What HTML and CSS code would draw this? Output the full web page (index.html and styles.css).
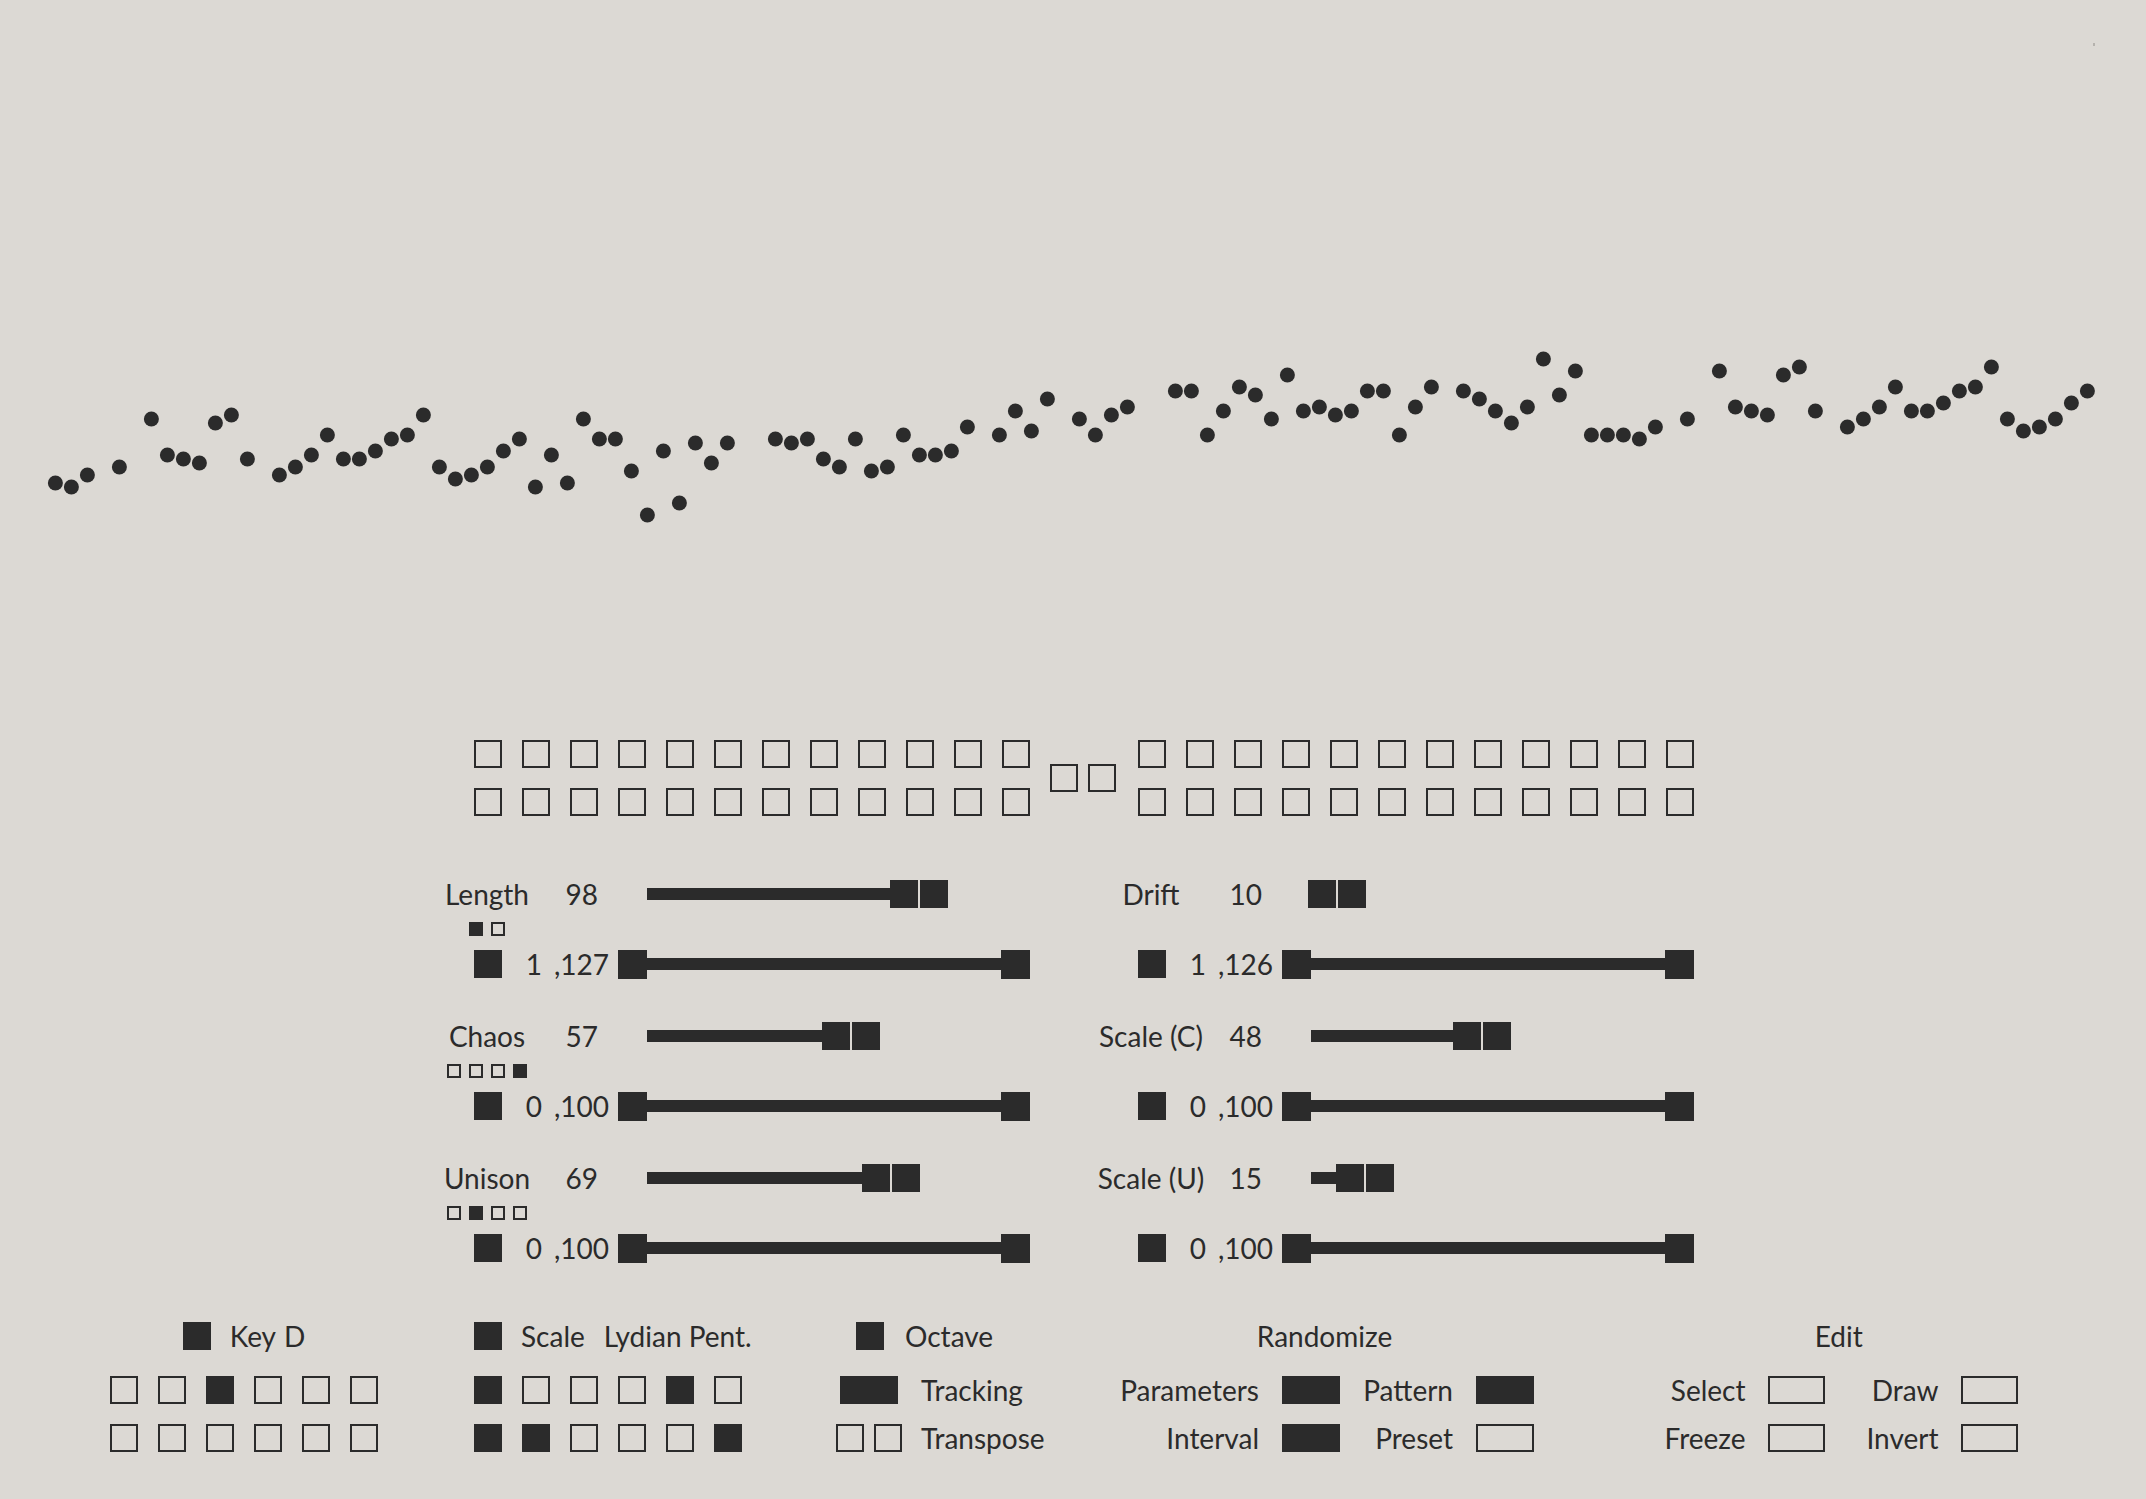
FILE: index.html
```html
<!DOCTYPE html>
<html lang="en">
<head>
<meta charset="utf-8">
<title>Sequencer</title>
<link rel="stylesheet" href="styles.css">
</head>
<body>
<svg class="plot" width="2146" height="720" viewBox="0 0 2146 720" xmlns="http://www.w3.org/2000/svg">
  <rect x="2093" y="43" width="2" height="3" fill="#b5b2ad"/>
  <g fill="#2b2b2b">
    <circle cx="55.4" cy="483" r="7.5"/><circle cx="71.4" cy="487" r="7.5"/><circle cx="87.4" cy="475" r="7.5"/>
    <circle cx="119.4" cy="467" r="7.5"/><circle cx="151.4" cy="419" r="7.5"/><circle cx="167.4" cy="455" r="7.5"/>
    <circle cx="183.4" cy="459" r="7.5"/><circle cx="199.4" cy="463" r="7.5"/><circle cx="215.4" cy="423" r="7.5"/>
    <circle cx="231.4" cy="415" r="7.5"/><circle cx="247.4" cy="459" r="7.5"/><circle cx="279.4" cy="475" r="7.5"/>
    <circle cx="295.4" cy="467" r="7.5"/><circle cx="311.4" cy="455" r="7.5"/><circle cx="327.4" cy="435" r="7.5"/>
    <circle cx="343.4" cy="459" r="7.5"/><circle cx="359.4" cy="459" r="7.5"/><circle cx="375.4" cy="451" r="7.5"/>
    <circle cx="391.4" cy="439" r="7.5"/><circle cx="407.4" cy="435" r="7.5"/><circle cx="423.4" cy="415" r="7.5"/>
    <circle cx="439.4" cy="467" r="7.5"/><circle cx="455.4" cy="479" r="7.5"/><circle cx="471.4" cy="475" r="7.5"/>
    <circle cx="487.4" cy="467" r="7.5"/><circle cx="503.4" cy="451" r="7.5"/><circle cx="519.4" cy="439" r="7.5"/>
    <circle cx="535.4" cy="487" r="7.5"/><circle cx="551.4" cy="455" r="7.5"/><circle cx="567.4" cy="483" r="7.5"/>
    <circle cx="583.4" cy="419" r="7.5"/><circle cx="599.4" cy="439" r="7.5"/><circle cx="615.4" cy="439" r="7.5"/>
    <circle cx="631.4" cy="471" r="7.5"/><circle cx="647.4" cy="515" r="7.5"/><circle cx="663.4" cy="451" r="7.5"/>
    <circle cx="679.4" cy="503" r="7.5"/><circle cx="695.4" cy="443" r="7.5"/><circle cx="711.4" cy="463" r="7.5"/>
    <circle cx="727.4" cy="443" r="7.5"/><circle cx="775.4" cy="439" r="7.5"/><circle cx="791.4" cy="443" r="7.5"/>
    <circle cx="807.4" cy="439" r="7.5"/><circle cx="823.4" cy="459" r="7.5"/><circle cx="839.4" cy="467" r="7.5"/>
    <circle cx="855.4" cy="439" r="7.5"/><circle cx="871.4" cy="471" r="7.5"/><circle cx="887.4" cy="467" r="7.5"/>
    <circle cx="903.4" cy="435" r="7.5"/><circle cx="919.4" cy="455" r="7.5"/><circle cx="935.4" cy="455" r="7.5"/>
    <circle cx="951.4" cy="451" r="7.5"/><circle cx="967.4" cy="427" r="7.5"/><circle cx="999.4" cy="435" r="7.5"/>
    <circle cx="1015.4" cy="411" r="7.5"/><circle cx="1031.4" cy="431" r="7.5"/><circle cx="1047.4" cy="399" r="7.5"/>
    <circle cx="1079.4" cy="419" r="7.5"/><circle cx="1095.4" cy="435" r="7.5"/><circle cx="1111.4" cy="415" r="7.5"/>
    <circle cx="1127.4" cy="407" r="7.5"/><circle cx="1175.4" cy="391" r="7.5"/><circle cx="1191.4" cy="391" r="7.5"/>
    <circle cx="1207.4" cy="435" r="7.5"/><circle cx="1223.4" cy="411" r="7.5"/><circle cx="1239.4" cy="387" r="7.5"/>
    <circle cx="1255.4" cy="395" r="7.5"/><circle cx="1271.4" cy="419" r="7.5"/><circle cx="1287.4" cy="375" r="7.5"/>
    <circle cx="1303.4" cy="411" r="7.5"/><circle cx="1319.4" cy="407" r="7.5"/><circle cx="1335.4" cy="415" r="7.5"/>
    <circle cx="1351.4" cy="411" r="7.5"/><circle cx="1367.4" cy="391" r="7.5"/><circle cx="1383.4" cy="391" r="7.5"/>
    <circle cx="1399.4" cy="435" r="7.5"/><circle cx="1415.4" cy="407" r="7.5"/><circle cx="1431.4" cy="387" r="7.5"/>
    <circle cx="1463.4" cy="391" r="7.5"/><circle cx="1479.4" cy="399" r="7.5"/><circle cx="1495.4" cy="411" r="7.5"/>
    <circle cx="1511.4" cy="423" r="7.5"/><circle cx="1527.4" cy="407" r="7.5"/><circle cx="1543.4" cy="359" r="7.5"/>
    <circle cx="1559.4" cy="395" r="7.5"/><circle cx="1575.4" cy="371" r="7.5"/><circle cx="1591.4" cy="435" r="7.5"/>
    <circle cx="1607.4" cy="435" r="7.5"/><circle cx="1623.4" cy="435" r="7.5"/><circle cx="1639.4" cy="439" r="7.5"/>
    <circle cx="1655.4" cy="427" r="7.5"/><circle cx="1687.4" cy="419" r="7.5"/><circle cx="1719.4" cy="371" r="7.5"/>
    <circle cx="1735.4" cy="407" r="7.5"/><circle cx="1751.4" cy="411" r="7.5"/><circle cx="1767.4" cy="415" r="7.5"/>
    <circle cx="1783.4" cy="375" r="7.5"/><circle cx="1799.4" cy="367" r="7.5"/><circle cx="1815.4" cy="411" r="7.5"/>
    <circle cx="1847.4" cy="427" r="7.5"/><circle cx="1863.4" cy="419" r="7.5"/><circle cx="1879.4" cy="407" r="7.5"/>
    <circle cx="1895.4" cy="387" r="7.5"/><circle cx="1911.4" cy="411" r="7.5"/><circle cx="1927.4" cy="411" r="7.5"/>
    <circle cx="1943.4" cy="403" r="7.5"/><circle cx="1959.4" cy="391" r="7.5"/><circle cx="1975.4" cy="387" r="7.5"/>
    <circle cx="1991.4" cy="367" r="7.5"/><circle cx="2007.4" cy="419" r="7.5"/><circle cx="2023.4" cy="431" r="7.5"/>
    <circle cx="2039.4" cy="427" r="7.5"/><circle cx="2055.4" cy="419" r="7.5"/><circle cx="2071.4" cy="403" r="7.5"/>
    <circle cx="2087.4" cy="391" r="7.5"/>
  </g>
</svg>

<div class="seq">
  <div class="seq-grp">
    <i class="sq"></i><i class="sq"></i><i class="sq"></i><i class="sq"></i><i class="sq"></i><i class="sq"></i><i class="sq"></i><i class="sq"></i><i class="sq"></i><i class="sq"></i><i class="sq"></i><i class="sq"></i>
    <i class="sq"></i><i class="sq"></i><i class="sq"></i><i class="sq"></i><i class="sq"></i><i class="sq"></i><i class="sq"></i><i class="sq"></i><i class="sq"></i><i class="sq"></i><i class="sq"></i><i class="sq"></i>
  </div>
  <div class="seq-mid"><i class="sq"></i><i class="sq"></i></div>
  <div class="seq-grp seq-right">
    <i class="sq"></i><i class="sq"></i><i class="sq"></i><i class="sq"></i><i class="sq"></i><i class="sq"></i><i class="sq"></i><i class="sq"></i><i class="sq"></i><i class="sq"></i><i class="sq"></i><i class="sq"></i>
    <i class="sq"></i><i class="sq"></i><i class="sq"></i><i class="sq"></i><i class="sq"></i><i class="sq"></i><i class="sq"></i><i class="sq"></i><i class="sq"></i><i class="sq"></i><i class="sq"></i><i class="sq"></i>
  </div>
</div>

<div class="controls">
  <div class="ctl">
    <div class="ctl-top">
      <span class="lbl">Length</span><span class="val">98</span>
      <div class="vslider"><div class="vtrack" style="width:243px"></div><div class="knob"><i></i><i></i></div></div>
    </div>
    <div class="ctl-modes"><i class="sqs on"></i><i class="sqs"></i></div>
    <div class="ctl-range">
      <i class="sq on"></i><span class="rmin">1</span><span class="rmax">,127</span>
      <div class="rslider"><i class="rk"></i><div class="rtrack"></div><i class="rk"></i></div>
    </div>
  </div>
  <div class="ctl">
    <div class="ctl-top">
      <span class="lbl">Drift</span><span class="val">10</span>
      <div class="vslider"><div class="vtrack" style="width:0px"></div><div class="knob knob-start"><i></i><i></i></div></div>
    </div>
    <div class="ctl-modes"></div>
    <div class="ctl-range">
      <i class="sq on"></i><span class="rmin">1</span><span class="rmax">,126</span>
      <div class="rslider"><i class="rk"></i><div class="rtrack"></div><i class="rk"></i></div>
    </div>
  </div>
  <div class="ctl">
    <div class="ctl-top">
      <span class="lbl">Chaos</span><span class="val">57</span>
      <div class="vslider"><div class="vtrack" style="width:175px"></div><div class="knob"><i></i><i></i></div></div>
    </div>
    <div class="ctl-modes"><i class="sqs"></i><i class="sqs"></i><i class="sqs"></i><i class="sqs on"></i></div>
    <div class="ctl-range">
      <i class="sq on"></i><span class="rmin">0</span><span class="rmax">,100</span>
      <div class="rslider"><i class="rk"></i><div class="rtrack"></div><i class="rk"></i></div>
    </div>
  </div>
  <div class="ctl">
    <div class="ctl-top">
      <span class="lbl">Scale (C)</span><span class="val">48</span>
      <div class="vslider"><div class="vtrack" style="width:142px"></div><div class="knob"><i></i><i></i></div></div>
    </div>
    <div class="ctl-modes"></div>
    <div class="ctl-range">
      <i class="sq on"></i><span class="rmin">0</span><span class="rmax">,100</span>
      <div class="rslider"><i class="rk"></i><div class="rtrack"></div><i class="rk"></i></div>
    </div>
  </div>
  <div class="ctl">
    <div class="ctl-top">
      <span class="lbl">Unison</span><span class="val">69</span>
      <div class="vslider"><div class="vtrack" style="width:215px"></div><div class="knob"><i></i><i></i></div></div>
    </div>
    <div class="ctl-modes"><i class="sqs"></i><i class="sqs on"></i><i class="sqs"></i><i class="sqs"></i></div>
    <div class="ctl-range">
      <i class="sq on"></i><span class="rmin">0</span><span class="rmax">,100</span>
      <div class="rslider"><i class="rk"></i><div class="rtrack"></div><i class="rk"></i></div>
    </div>
  </div>
  <div class="ctl">
    <div class="ctl-top">
      <span class="lbl">Scale (U)</span><span class="val">15</span>
      <div class="vslider"><div class="vtrack" style="width:25px"></div><div class="knob"><i></i><i></i></div></div>
    </div>
    <div class="ctl-modes"></div>
    <div class="ctl-range">
      <i class="sq on"></i><span class="rmin">0</span><span class="rmax">,100</span>
      <div class="rslider"><i class="rk"></i><div class="rtrack"></div><i class="rk"></i></div>
    </div>
  </div>
</div>

<div class="bottom">
  <div class="b-key">
    <div class="bhead key-head"><i class="sq on"></i><span>Key</span><span class="kv">D</span></div>
    <div class="bgrid6">
      <i class="sq"></i><i class="sq"></i><i class="sq on"></i><i class="sq"></i><i class="sq"></i><i class="sq"></i>
      <i class="sq"></i><i class="sq"></i><i class="sq"></i><i class="sq"></i><i class="sq"></i><i class="sq"></i>
    </div>
  </div>
  <div class="b-scale">
    <div class="bhead"><i class="sq on"></i><span>Scale</span><span>Lydian Pent.</span></div>
    <div class="bgrid6">
      <i class="sq on"></i><i class="sq"></i><i class="sq"></i><i class="sq"></i><i class="sq on"></i><i class="sq"></i>
      <i class="sq on"></i><i class="sq on"></i><i class="sq"></i><i class="sq"></i><i class="sq"></i><i class="sq on"></i>
    </div>
  </div>
  <div class="b-oct">
    <div class="bhead oct-head"><i class="sq on"></i><span>Octave</span></div>
    <div class="orows">
      <div class="orow"><div class="octl"><i class="wide on"></i></div><span>Tracking</span></div>
      <div class="orow"><div class="octl"><i class="sq"></i><i class="sq"></i></div><span>Transpose</span></div>
    </div>
  </div>
  <div class="b-rand">
    <div class="bhead center">Randomize</div>
    <div class="pgrid rand-grid">
      <span class="pl">Parameters</span><i class="wide on"></i><span class="pl">Pattern</span><i class="wide on"></i>
      <span class="pl">Interval</span><i class="wide on"></i><span class="pl">Preset</span><i class="wide"></i>
    </div>
  </div>
  <div class="b-edit">
    <div class="bhead center">Edit</div>
    <div class="pgrid edit-grid">
      <span class="pl">Select</span><i class="wide"></i><span class="pl">Draw</span><i class="wide"></i>
      <span class="pl">Freeze</span><i class="wide"></i><span class="pl">Invert</span><i class="wide"></i>
    </div>
  </div>
</div>
</body>
</html>
```

FILE: styles.css
```css
* { box-sizing: border-box; }

html, body {
  margin: 0;
  padding: 0;
  background: #dcd9d4;
}

body {
  width: 2146px;
  height: 1499px;
  overflow: hidden;
  font-family: "Lato", "Liberation Sans", sans-serif;
  font-weight: 400;
  font-size: 28px;
  line-height: 28px;
  color: #2b2b2b;
}

i { display: block; }

.plot { display: block; }

/* generic squares */
.sq {
  width: 28px;
  height: 28px;
  border: 2px solid #2b2b2b;
  flex: none;
}
.sq.on { background: #2b2b2b; }

.wide {
  width: 58px;
  height: 28px;
  border: 2px solid #2b2b2b;
  flex: none;
}
.wide.on { background: #2b2b2b; }

/* step grid */
.seq {
  display: flex;
  align-items: center;
  padding: 20px 0 0 474px;
}
.seq-grp {
  display: grid;
  grid-template-columns: repeat(12, 28px);
  gap: 20px;
}
.seq-mid {
  display: flex;
  gap: 10.5px;
  margin-left: 19.5px;
}
.seq-right { margin-left: 22px; }

/* controls */
.controls {
  display: grid;
  grid-template-columns: 664px 664px;
  row-gap: 43.5px;
  padding-left: 427px;
  margin-top: 64px;
}
.ctl-top {
  display: flex;
  align-items: center;
  height: 28px;
}
.lbl {
  width: 120px;
  text-align: center;
  white-space: nowrap;
}
.val {
  width: 51px;
  text-align: right;
}
.vslider {
  margin-left: 49px;
  width: 383px;
  display: flex;
  align-items: center;
}
.vtrack {
  height: 12px;
  background: #2b2b2b;
}
.knob {
  display: flex;
  gap: 2px;
}
.knob i {
  width: 28px;
  height: 28px;
  background: #2b2b2b;
}
.knob-start { margin-left: -3px; }

.ctl-modes {
  margin-top: 14px;
  height: 14px;
  width: 120px;
  display: flex;
  justify-content: center;
  gap: 8px;
}
.sqs {
  width: 14px;
  height: 14px;
  border: 2px solid #2b2b2b;
}
.sqs.on { background: #2b2b2b; }

.ctl-range {
  margin-top: 13.5px;
  height: 29px;
  display: flex;
  align-items: center;
  padding-left: 47px;
}
.rmin {
  width: 40px;
  text-align: right;
}
.rmax {
  margin-left: 12px;
  width: 64px;
}
.rslider {
  width: 412px;
  display: flex;
  align-items: center;
}
.rk {
  width: 29px;
  height: 29px;
  background: #2b2b2b;
}
.rtrack {
  flex: 1;
  height: 12px;
  background: #2b2b2b;
}

/* bottom */
.bottom {
  display: flex;
  margin-top: 59.5px;
  padding-left: 110px;
}
.bhead {
  display: flex;
  align-items: center;
  gap: 19px;
  height: 28px;
  white-space: nowrap;
}
.bhead.center { justify-content: center; }

.b-key { width: 268px; }
.key-head { justify-content: center; }
.key-head .kv { margin-left: -11px; }

.b-scale {
  width: 293px;
  margin-left: 96px;
}
.bgrid6 {
  display: grid;
  grid-template-columns: repeat(6, 28px);
  gap: 20px;
  margin-top: 26px;
}

.b-oct {
  width: 215px;
  margin-left: 69px;
}
.oct-head { padding-left: 20px; gap: 21px; }
.orows {
  margin-top: 26px;
  display: flex;
  flex-direction: column;
  gap: 20px;
}
.orow {
  display: flex;
  align-items: center;
  gap: 19px;
  height: 28px;
}
.octl {
  width: 66px;
  display: flex;
  justify-content: center;
  gap: 10px;
}

.b-rand {
  width: 419px;
  margin-left: 64px;
}
.b-edit {
  width: 360.5px;
  margin-left: 124.5px;
}
.pgrid {
  display: grid;
  margin-top: 26px;
  row-gap: 20px;
  column-gap: 23px;
  align-items: center;
}
.rand-grid { grid-template-columns: 144px 58px 90px 58px; }
.edit-grid { grid-template-columns: 87px 57px 91px 57px; column-gap: 22.5px; }
.edit-grid .wide { width: 57px; }
.pl {
  justify-self: end;
  white-space: nowrap;
}
```
